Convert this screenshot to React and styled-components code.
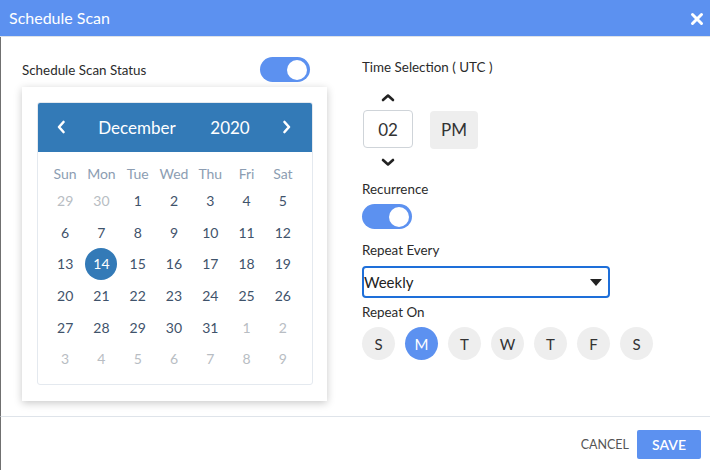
import React from "react";
import styled, { createGlobalStyle } from "styled-components";

const Global = createGlobalStyle`
  html, body { margin: 0; padding: 0; background: #fff; }
  body { font-family: Lato, "Open Sans", sans-serif; color: #333; }
  * { box-sizing: border-box; }
`;

const BLUE = "#5c91f0";
const CAL_BLUE = "#337ab7";

const Modal = styled.div`
  width: 710px;
  height: 470px;
  display: flex;
  flex-direction: column;
  background: #fff;
  overflow: hidden;
`;

const Header = styled.div`
  height: 37px;
  flex: none;
  background: ${BLUE};
  border-bottom: 1px solid #dde2e8;
  display: flex;
  align-items: center;
  justify-content: space-between;
  padding: 0 6px 0 9px;
`;

const Title = styled.div`
  color: #fff;
  font-size: 16px;
  line-height: 20px;
  margin-top: -1px;
`;

const CloseBtn = styled.button`
  border: 0;
  background: none;
  padding: 0;
  width: 14px;
  height: 14px;
  display: flex;
  margin-top: 1px;
`;

const Body = styled.div`
  flex: 1;
  display: grid;
  grid-template-columns: 339px 1fr;
  border-left: 1px solid #707070;
  border-bottom: 1px solid #dfe4ea;
`;

const LeftCol = styled.div`
  padding: 20px 0 0 21px;
  display: flex;
  flex-direction: column;
  align-items: flex-start;
`;

const StatusRow = styled.div`
  width: 288px;
  display: flex;
  align-items: center;
  justify-content: space-between;
  height: 25px;
`;

const Label = styled.div`
  font-size: 13.4px;
  line-height: 20px;
  color: #2b2b2b;
  margin-top: ${(p) => p.$mt || 0}px;
`;

const Toggle = styled.div`
  width: 50px;
  height: 25px;
  border-radius: 13px;
  background: ${BLUE};
  position: relative;
  flex: none;
  margin-top: ${(p) => p.$mt || 0}px;
  &::after {
    content: "";
    position: absolute;
    right: 3px;
    top: 2.5px;
    width: 20px;
    height: 20px;
    border-radius: 50%;
    background: #fff;
  }
`;

const Popover = styled.div`
  margin-top: 5px;
  width: 305px;
  padding: 15px 14px 16px 15px;
  background: #fff;
  box-shadow: 0 2px 8px rgba(0, 0, 0, 0.22);
`;

const Calendar = styled.div`
  border: 1px solid #e4e9ef;
  border-radius: 3px;
  overflow: hidden;
`;

const CalHeader = styled.div`
  height: 50px;
  background: ${CAL_BLUE};
  display: flex;
  align-items: center;
  color: #fff;
  font-size: 17px;
  padding-right: 10px;
  margin: -1px -1px 0;
`;

const NavBtn = styled.div`
  width: ${(p) => p.$w}px;
  display: flex;
  justify-content: center;
  align-items: center;
`;

const HeadText = styled.div`
  width: ${(p) => p.$w}px;
  text-align: center;
`;

const Grid = styled.div`
  display: grid;
  grid-template-columns: repeat(7, 1fr);
  padding: 9px 11px 9px 9px;
  grid-auto-rows: 31.6px;
  grid-template-rows: 24px;
`;

const WeekDay = styled.div`
  display: flex;
  align-items: center;
  justify-content: center;
  font-size: 14px;
  color: #8c9db2;
`;

const Day = styled.div`
  display: flex;
  align-items: center;
  justify-content: center;
  font-size: 14px;
  color: ${(p) => (p.$muted ? "#b8bdc3" : "#3f536b")};
  span {
    width: 32px;
    height: 32px;
    border-radius: 50%;
    display: flex;
    align-items: center;
    justify-content: center;
    background: ${(p) => (p.$sel ? CAL_BLUE : "transparent")};
    color: ${(p) => (p.$sel ? "#fff" : "inherit")};
  }
`;

const RightCol = styled.div`
  padding: 20px 0 0 22px;
  display: flex;
  flex-direction: column;
  align-items: flex-start;
`;

const TimeRow = styled.div`
  display: flex;
  align-items: center;
  gap: 17px;
  margin-top: 14px;
`;

const Spinner = styled.div`
  display: flex;
  flex-direction: column;
  align-items: center;
  width: 50px;
  margin-left: 1px;
`;

const Chevron = styled.div`
  height: 12px;
  display: flex;
  align-items: center;
  justify-content: center;
`;

const HourBox = styled.div`
  width: 50px;
  height: 38px;
  border: 1px solid #cfd4d9;
  border-radius: 4px;
  display: flex;
  align-items: center;
  justify-content: center;
  font-size: 17px;
  color: #333;
  margin: ${(p) => p.$m};
`;

const Meridiem = styled.button`
  width: 48px;
  height: 38px;
  border: 0;
  border-radius: 4px;
  background: #eeeeee;
  font-family: inherit;
  font-size: 17px;
  color: #333;
  padding: 0;
`;

const Select = styled.div`
  margin-top: 6px;
  width: 248px;
  height: 32px;
  border: 2px solid #1e6fd9;
  border-radius: 4px;
  display: flex;
  align-items: center;
  justify-content: space-between;
  padding: 0 6px 0 0;
  font-size: 15px;
  color: #222;
`;

const Days = styled.div`
  display: flex;
  gap: 10px;
  margin-top: 5px;
`;

const DayDot = styled.div`
  width: 33px;
  height: 33px;
  border-radius: 50%;
  display: flex;
  align-items: center;
  justify-content: center;
  font-size: 15px;
  background: ${(p) => (p.$on ? BLUE : "#eeeeee")};
  color: ${(p) => (p.$on ? "#fff" : "#333")};
`;

const Footer = styled.div`
  height: 53px;
  flex: none;
  display: flex;
  align-items: center;
  justify-content: flex-end;
  padding: 0 9px 0 0;
  gap: 8px;
  border-left: 1px solid #707070;
`;

const TextBtn = styled.button`
  border: 0;
  background: none;
  font-family: inherit;
  font-size: 12.5px;
  color: #555;
  padding: 0;
  margin-top: 1px;
`;

const SaveBtn = styled.button`
  width: 64px;
  height: 29px;
  border: 0;
  border-radius: 2px;
  background: ${BLUE};
  color: #fff;
  font-family: inherit;
  font-size: 14px;
  font-weight: 600;
  padding: 0;
  margin-top: 1px;
`;

const weekdays = ["Sun", "Mon", "Tue", "Wed", "Thu", "Fri", "Sat"];
const cells = [
  ...[29, 30].map((d) => ({ d, m: true })),
  ...Array.from({ length: 31 }, (_, i) => ({ d: i + 1 })),
  ...Array.from({ length: 9 }, (_, i) => ({ d: i + 1, m: true })),
];

const ChevL = () => (
  <svg width="10" height="14" viewBox="0 0 10 14">
    <path d="M7.5 2 L3 7 L7.5 12" fill="none" stroke="#fff" strokeWidth="2.6" strokeLinecap="round" strokeLinejoin="round" />
  </svg>
);
const ChevR = () => (
  <svg width="10" height="14" viewBox="0 0 10 14">
    <path d="M2.5 2 L7 7 L2.5 12" fill="none" stroke="#fff" strokeWidth="2.6" strokeLinecap="round" strokeLinejoin="round" />
  </svg>
);
const Up = () => (
  <svg width="14" height="9" viewBox="0 0 14 9">
    <path d="M2 7 L7 2.5 L12 7" fill="none" stroke="#222" strokeWidth="2.6" strokeLinecap="round" strokeLinejoin="round" />
  </svg>
);
const Down = () => (
  <svg width="14" height="9" viewBox="0 0 14 9">
    <path d="M2 2 L7 6.5 L12 2" fill="none" stroke="#222" strokeWidth="2.6" strokeLinecap="round" strokeLinejoin="round" />
  </svg>
);

export default function App() {
  return (
    <>
      <Global />
      <Modal>
        <Header>
          <Title>Schedule Scan</Title>
          <CloseBtn aria-label="close">
            <svg width="14" height="14" viewBox="0 0 14 14">
              <path d="M2.5 2.5 L11.5 11.5 M11.5 2.5 L2.5 11.5" stroke="#fff" strokeWidth="3" strokeLinecap="round" />
            </svg>
          </CloseBtn>
        </Header>
        <Body>
          <LeftCol>
            <StatusRow>
              <Label>Schedule Scan Status</Label>
              <Toggle />
            </StatusRow>
            <Popover>
              <Calendar>
                <CalHeader>
                  <NavBtn $w={48}><ChevL /></NavBtn>
                  <HeadText $w={104}>December</HeadText>
                  <HeadText $w={82}>2020</HeadText>
                  <NavBtn $w={32}><ChevR /></NavBtn>
                </CalHeader>
                <Grid>
                  {weekdays.map((w) => (
                    <WeekDay key={w}>{w}</WeekDay>
                  ))}
                  {cells.map((c, i) => (
                    <Day key={i} $muted={c.m} $sel={!c.m && c.d === 14}>
                      <span>{c.d}</span>
                    </Day>
                  ))}
                </Grid>
              </Calendar>
            </Popover>
          </LeftCol>
          <RightCol>
            <Label>Time Selection ( UTC )</Label>
            <TimeRow>
              <Spinner>
                <Chevron><Up /></Chevron>
                <HourBox $m="7px 0 8px">02</HourBox>
                <Chevron><Down /></Chevron>
              </Spinner>
              <Meridiem>PM</Meridiem>
            </TimeRow>
            <Label $mt={11}>Recurrence</Label>
            <Toggle $mt={5} />
            <Label $mt={11}>Repeat Every</Label>
            <Select>
              <span>Weekly</span>
              <svg width="12" height="7" viewBox="0 0 12 7">
                <path d="M0 0 H12 L6 7 Z" fill="#222" />
              </svg>
            </Select>
            <Label $mt={4}>Repeat On</Label>
            <Days>
              {["S", "M", "T", "W", "T", "F", "S"].map((d, i) => (
                <DayDot key={i} $on={i === 1}>{d}</DayDot>
              ))}
            </Days>
          </RightCol>
        </Body>
        <Footer>
          <TextBtn>CANCEL</TextBtn>
          <SaveBtn>SAVE</SaveBtn>
        </Footer>
      </Modal>
    </>
  );
}
